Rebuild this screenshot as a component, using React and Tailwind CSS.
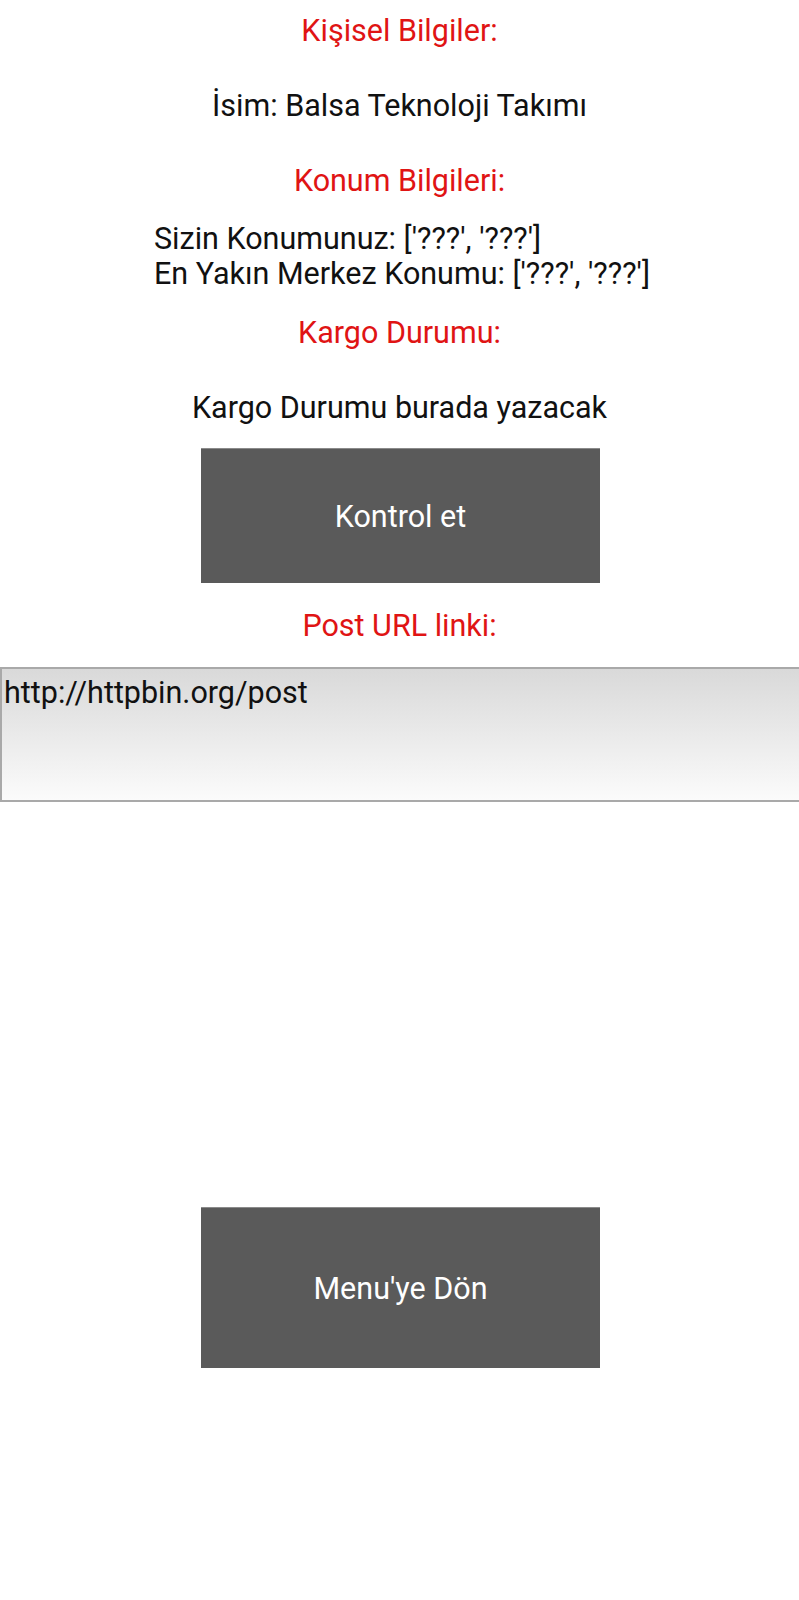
const Heading = ({ children, className = "" }) => (
  <div className={`text-[30.5px] leading-[35px] text-[#e01414] ${className}`}>{children}</div>
)

const Line = ({ children, className = "" }) => (
  <div className={`text-[30.5px] leading-[35px] text-[#111] ${className}`}>{children}</div>
)

const GrayButton = ({ children, className = "" }) => (
  <button className={`self-start ml-[201px] w-[399px] bg-[#5a5a5a] text-white text-[30.5px] leading-[35px] flex items-center justify-center border-t border-[#8a8a8a] ${className}`}>
    {children}
  </button>
)

export default function App() {
  return (
    <div className="min-h-[1600px] bg-white flex flex-col items-center font-['Roboto',sans-serif]">
      <Heading className="mt-[13px]">Kişisel Bilgiler:</Heading>
      <Line className="mt-[40px]">İsim: Balsa Teknoloji Takımı</Line>
      <Heading className="mt-[40px]">Konum Bilgileri:</Heading>

      <div className="mt-[23px] self-start ml-[154px]">
        <Line>Sizin Konumunuz: ['???', '???']</Line>
        <Line>En Yakın Merkez Konumu: ['???', '???']</Line>
      </div>

      <Heading className="mt-[24px]">Kargo Durumu:</Heading>
      <Line className="mt-[40px]">Kargo Durumu burada yazacak</Line>

      <GrayButton className="mt-[23px] h-[135px]">Kontrol et</GrayButton>

      <Heading className="mt-[25px]">Post URL linki:</Heading>

      <div className="mt-[24px] w-full h-[135px] border-y-2 border-l-2 border-[#a9a9a9] bg-gradient-to-b from-[#d9d9d9] to-[#fbfbfb] pt-[6px] pl-[2px]">
        <div className="text-[30.5px] leading-[35px] text-[#111]">http://httpbin.org/post</div>
      </div>

      <GrayButton className="mt-[405px] h-[161px]">Menu'ye Dön</GrayButton>
    </div>
  )
}
